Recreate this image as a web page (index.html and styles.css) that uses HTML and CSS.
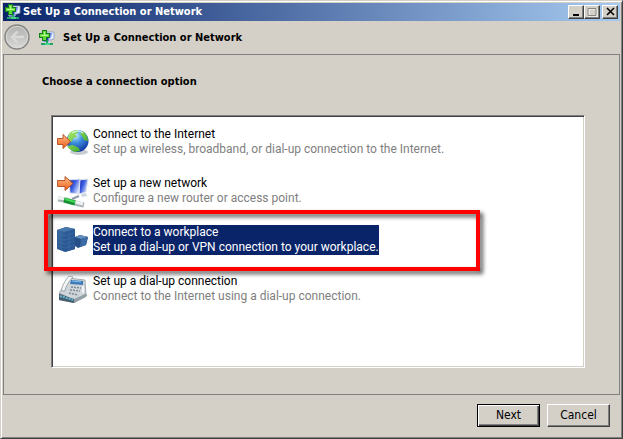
FILE: index.html
```html
<!DOCTYPE html>
<html lang="en">
<head>
<meta charset="utf-8">
<title>Set Up a Connection or Network</title>
<link rel="stylesheet" href="styles.css">
</head>
<body>
<svg class="defs" aria-hidden="true">
  <defs>
    <linearGradient id="screen" x1="0" y1="0" x2="1" y2="0.6"><stop offset="0" stop-color="#0b1fa8"/><stop offset=".5" stop-color="#3d5de0"/><stop offset="1" stop-color="#dce8ff"/></linearGradient>
    <linearGradient id="orange" x1="0" y1="0" x2="0" y2="1"><stop offset="0" stop-color="#ffc08a"/><stop offset="1" stop-color="#ee5a18"/></linearGradient>
    <radialGradient id="globe" cx=".4" cy=".25" r=".8"><stop offset="0" stop-color="#d3f4ff"/><stop offset=".4" stop-color="#3f92e0"/><stop offset="1" stop-color="#102f9c"/></radialGradient>
    <linearGradient id="green" x1="0" y1="0" x2="1" y2="1"><stop offset="0" stop-color="#b4f070"/><stop offset="1" stop-color="#259a20"/></linearGradient>
    <linearGradient id="disc" x1="0" y1="0" x2="0" y2="1"><stop offset="0" stop-color="#b2b2b0"/><stop offset=".5" stop-color="#c3c3c1"/><stop offset="1" stop-color="#dcdcda"/></linearGradient>
    <linearGradient id="tower" x1="0" y1="0" x2="1" y2="1"><stop offset="0" stop-color="#39699f"/><stop offset="1" stop-color="#234d89"/></linearGradient>
    <symbol id="network" viewBox="0 0 16 16">
      <path d="M7 2h8v7l-3 1H7z" fill="#e8eefb" stroke="#8997b5" stroke-width=".8"/>
      <path d="M8 3h5v6H8z" fill="url(#screen)"/>
      <path d="M3 5h7v7H4z" fill="#1d36bd" stroke="#cfdaf1"/>
      <path d="M8 10v4M2 14h12" stroke="#20a568" stroke-width="2"/>
      <path d="M6 13h5v2H6z" fill="#43d48c"/>
      <path d="M3 0h5v3h3v5H8v3H3V8H0V3h3z" fill="#167d1d"/>
      <path d="M4 1h3v3h3v3H7v3H4V7H1V4h3z" fill="#5fdc3c"/>
      <path d="M5 2h1v3h3v1H2V5h3z" fill="#b9f98e"/>
    </symbol>
  </defs>
</svg>
<main class="window">
  <header class="titlebar">
    <svg class="icon-small"><use href="#network"/></svg>
    <span class="caption">Set Up a Connection or Network</span>
    <div class="controls">
      <button type="button" class="control" aria-label="Minimize"><svg viewBox="0 0 12 10"><path d="M3 7h6v2H3z"/></svg></button>
      <button type="button" class="control" aria-label="Maximize" disabled><svg viewBox="0 0 12 10"><path d="M3 2h8v8H3z" fill="none" stroke="#fff"/><path d="M2 1.5h8v7H2z" fill="none" stroke="#8a8782"/></svg></button>
      <button type="button" class="control close" aria-label="Close"><svg viewBox="0 0 12 10"><path d="M3 1l7 7M10 1L3 8" stroke="#000" stroke-width="1.6"/></svg></button>
    </div>
  </header>
  <div class="header">
    <button type="button" class="back" aria-label="Back" disabled>
      <svg viewBox="0 0 26 26"><circle cx="13" cy="13" r="12" fill="url(#disc)" stroke="#858583" stroke-width="1.5"/><circle cx="13" cy="13" r="10.7" fill="none" stroke="#dfdfdd" stroke-width=".7"/><path d="M13.500 7.500L8 13l5.500 5.500M8.500 13H20" fill="none" stroke="#d9d9d7" stroke-width="2.400"/></svg>
    </button>
    <svg class="icon-small"><use href="#network"/></svg>
    <h1 class="heading">Set Up a Connection or Network</h1>
  </div>
  <section class="content">
    <h2 class="heading" id="choose">Choose a connection option</h2>
    <ul class="options" aria-labelledby="choose">
      <li class="option">
        <svg class="icon" viewBox="0 1 32 32">
          <ellipse cx="22" cy="26" rx="9" ry="3" fill="#c9cdd2"/>
          <circle cx="20.500" cy="15" r="11" fill="url(#globe)"/>
          <path d="M12 8c2-3 5-4 8-4l1 3-3 1 2 3-4 1-1 4-5-2zM25 5c4 2 6 6 6 10l-4-1-2-4-2-2zM10 20l6-1 6 3 1 3-5 1c-3-1-6-3-8-6z" fill="url(#green)"/>
          <path d="M15 7q6-4 11 0" fill="none" stroke="#eaffff" stroke-width="1.500" opacity=".7"/>
          <path d="M.5 12.500H6V8.500L13.500 15.500 6 22.500v-4H.5z" fill="url(#orange)" stroke="#b34a1c" stroke-width=".9"/>
        </svg>
        <div class="text"><div>Connect to the Internet</div><div class="detail">Set up a wireless, broadband, or dial-up connection to the Internet.</div></div>
      </li>
      <li class="option">
        <svg class="icon" viewBox="0 0 32 32">
          <path d="M22 4l9-1-2 13-7 2z" fill="url(#screen)" stroke="#dce3ef"/>
          <path d="M12 4l11-1-1 15-9-1z" fill="url(#screen)" stroke="#dce3ef"/>
          <path d="M24 18l5-1 1 3-5 1z" fill="#ced6df"/>
          <path d="M1 23l8 1 13 4 5 1" fill="none" stroke="#a7b1b6" stroke-width="5"/>
          <path d="M1 22l8 1 13 4 4 1" fill="none" stroke="#edf1f1" stroke-width="3"/>
          <path d="M7 24l11 3" stroke="#168f31" stroke-width="5"/><path d="M8 23l10 3" stroke="#43da56" stroke-width="2"/>
          <path d="M15 23l7-3M15 23l3-1" stroke="#909caa" stroke-width="2"/>
          <path d="M.5 4.500H8V.5L16 7.500 8 14.500v-4H.5z" fill="url(#orange)" stroke="#b34a1c" stroke-width=".9"/>
        </svg>
        <div class="text"><div>Set up a new network</div><div class="detail">Configure a new router or access point.</div></div>
      </li>
      <li class="option selected">
        <svg class="icon" viewBox="0 0 32 32">
          <path d="M0 5l9-3 9 2v20l-10 3-8-3z" fill="url(#tower)"/>
          <path d="M0 5l9-3 9 2-10 3z" fill="#4778ab"/><path d="M8 7l10-3v20L8 27z" fill="#2c5994"/>
          <path d="M1 9l7 2 9-3M1 13l7 2 9-3M1 17l7 2 9-3M1 21l7 2 9-3M4 6v19M12 6v19" fill="none" stroke="#467aad" stroke-width=".4"/>
          <path d="M18 12l5-2 8 2-2 8-8 3-3-2z" fill="#274f88"/><path d="M18 12l5-2 8 2-7 2z" fill="#628fbb"/><path d="M24 14l7-2-2 8-6 2z" fill="#3b6ba4"/>
        </svg>
        <div class="text"><div>Connect to a workplace</div><div class="detail">Set up a dial-up or VPN connection to your workplace.</div></div>
        <div class="highlight"></div>
      </li>
      <li class="option">
        <svg class="icon" viewBox="0 0 32 32">
          <path d="M2 20l7-8 18 1 3 9-13 7L2 26z" fill="#7e8b95"/>
          <path d="M2 19L12 4l16 2 1 14-12 6z" fill="#cfd5d8" stroke="#8c969d" stroke-width=".7"/>
          <path d="M2 20l15 5v4L2 26z" fill="#465e70"/><path d="M3 22l13 4" stroke="#64c3dc" stroke-width="1.800" stroke-dasharray="2 1"/>
          <path d="M17 25l12-5v3l-12 6z" fill="#95a1a8"/>
          <path d="M14 6l12 1v4l-13-1z" fill="#4079b7"/><path d="M15 7l9 1" stroke="#7bc5ef"/>
          <path d="M5 17C3 15 9 5 12 2l4 1c-3 3-8 10-8 14z" fill="#f4f5f5" stroke="#8b969f" stroke-width=".8"/>
          <path d="M14 13l10 1M13 16l10 1M12 19l9 2" stroke="#7c8b96" stroke-width="1.500" stroke-dasharray="2 1"/>
          <path d="M26 12v7" stroke="#f2f5f6" stroke-width="2"/>
        </svg>
        <div class="text"><div>Set up a dial-up connection</div><div class="detail">Connect to the Internet using a dial-up connection.</div></div>
      </li>
    </ul>
  </section>
  <footer class="footer">
    <button type="button" class="button primary">Next</button>
    <button type="button" class="button">Cancel</button>
  </footer>
</main>
</body>
</html>
```
FILE: styles.css
```css
* { box-sizing: border-box; }
body {
  margin: 0;
  background: #d4d0c8;
  color: #000;
  font: 12px/15px Roboto, "Noto Sans", sans-serif;
}
.defs { position: absolute; width: 0; height: 0; }
.window {
  display: flex;
  flex-direction: column;
  min-height: 100vh;
  padding: 1px;
  background: #d4d0c8;
  border: 1px solid;
  border-color: #d4d0c8 #404040 #404040 #d4d0c8;
  box-shadow: inset 1px 1px #fff, inset -1px -1px #808080;
}
.titlebar {
  display: flex;
  align-items: center;
  gap: 2px;
  height: 18px;
  margin: 1px 1px 0;
  padding: 0 2px;
  background: linear-gradient(90deg, #0a246a, #a6caf0);
  color: #fff;
}
.caption, .heading {
  margin: 0;
  font: bold 11px/14px "DejaVu Sans Condensed", "DejaVu Sans", sans-serif;
}
.icon-small { width: 16px; height: 16px; flex: none; }
.controls { display: flex; margin-left: auto; }
.control {
  display: flex;
  width: 16px;
  height: 14px;
  padding: 1px;
  background: #d4d0c8;
  border: 1px solid;
  border-color: #fff #404040 #404040 #fff;
  box-shadow: inset -1px -1px #808080;
}
.control svg { width: 12px; height: 10px; }
.close { margin-left: 2px; }
.header {
  display: flex;
  align-items: center;
  height: 33px;
  padding: 0 2px;
}
.header .icon-small { margin: 0 8px 0 9px; }
.back { width: 26px; height: 26px; padding: 0; border: 0; background: none; margin-bottom: 2px; }
.back svg { display: block; }
.content {
  display: flex;
  flex: 1;
  flex-direction: column;
  margin: 0 1px;
  padding: 20px 34px 26px 47px;
  border: 1px solid #808080;
}
.content .heading { margin-left: -9px; }
.options {
  flex: 1;
  margin: 26px 0 0;
  padding: 11px 5px;
  list-style: none;
  background: #fff;
  border: 1px solid;
  border-color: #808080 #fff #fff #808080;
  box-shadow: inset 1px 1px #404040, inset -1px -1px #d4d0c8;
}
.option {
  position: relative;
  display: flex;
  align-items: flex-start;
  gap: 4px;
  height: 49px;
}
.icon { width: 32px; height: 32px; }
.text { white-space: nowrap; }
.detail { color: #808080; }
.selected .text, .selected .detail { background: #0a246a; color: #fff; }
.highlight {
  position: absolute;
  top: -15px;
  left: -13px;
  width: 436px;
  height: 61px;
  border: 4px solid #f00;
  filter: drop-shadow(3px 3px 2px rgb(0 0 0 / 65%));
}
.footer {
  display: flex;
  justify-content: flex-end;
  gap: 7px;
  padding: 9px 11px 10px;
}
.button {
  width: 63px;
  height: 23px;
  padding: 0;
  background: #d4d0c8;
  border: 1px solid;
  border-color: #fff #404040 #404040 #fff;
  box-shadow: inset -1px -1px #808080;
  color: #000;
  font: 12px/15px "DejaVu Sans Condensed", "DejaVu Sans", sans-serif;
}
.primary {
  border-color: #000;
  box-shadow: inset 1px 1px #fff, inset -1px -1px #404040, inset -2px -2px #808080;
}
```
